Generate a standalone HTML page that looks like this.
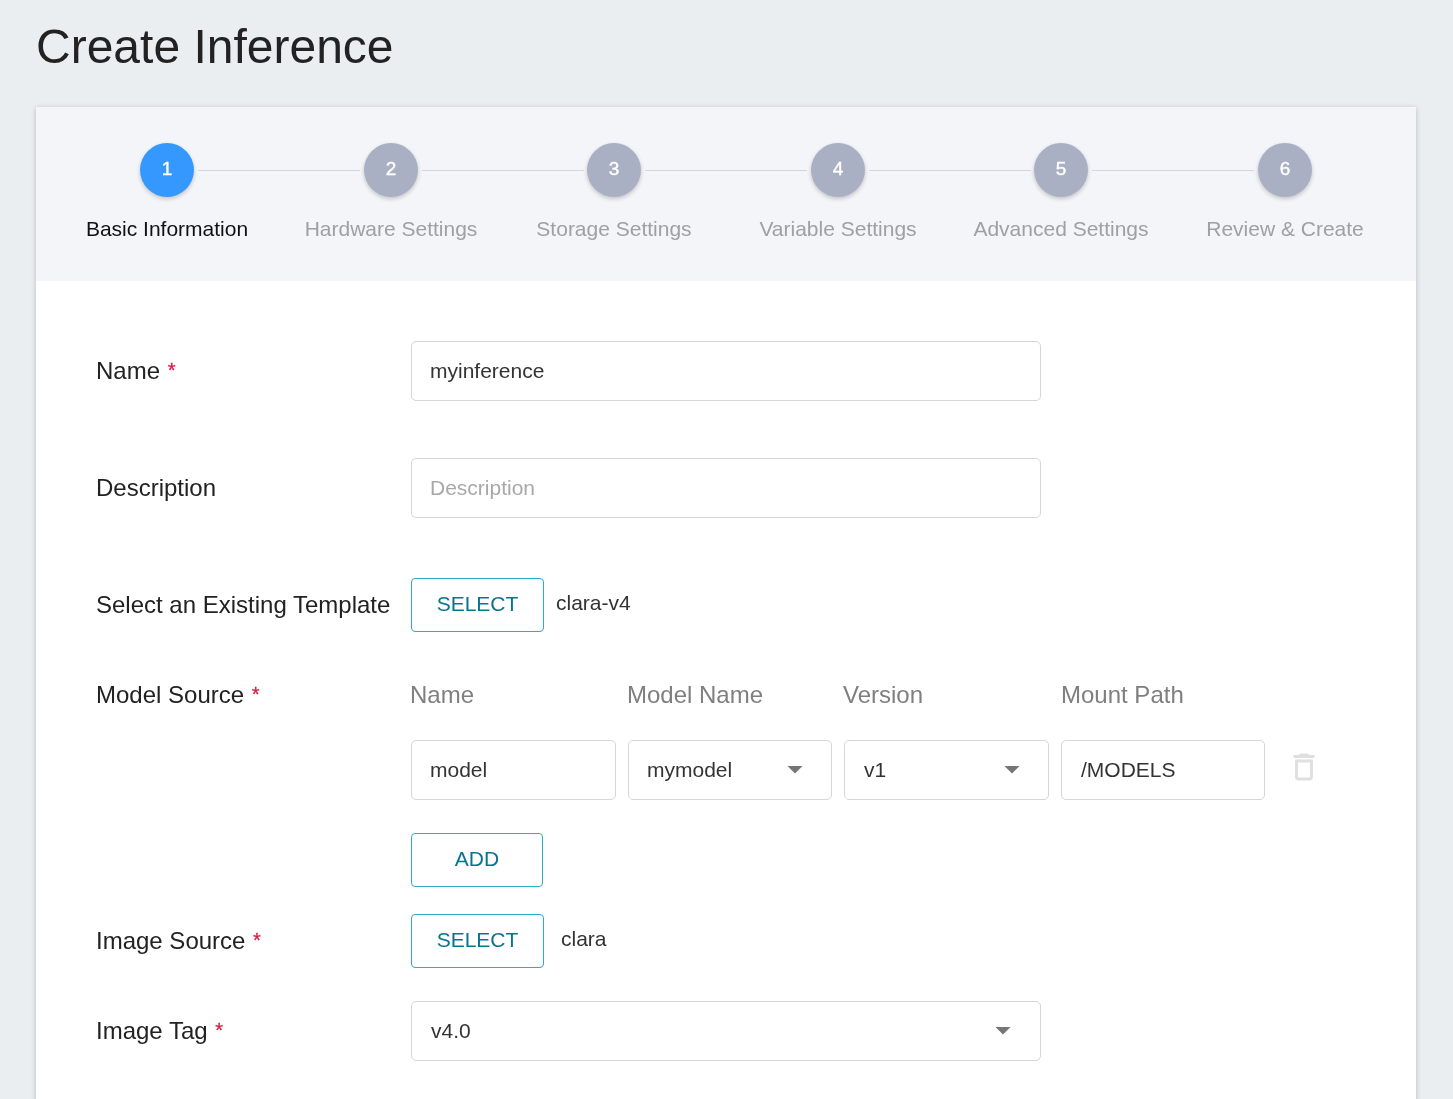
<!DOCTYPE html>
<html><head><meta charset="utf-8">
<style>
html,body{margin:0;padding:0;}
body{width:1453px;height:1099px;overflow:hidden;background:#ebeef1;font-family:"Liberation Sans",sans-serif;position:relative;}
.wrap{position:absolute;left:0;top:0;width:1453px;height:1099px;will-change:transform;}
.t{position:absolute;white-space:nowrap;line-height:1;}
.card{position:absolute;left:36px;top:107px;width:1380px;height:1100px;background:#fff;box-shadow:0 1px 5px rgba(0,0,0,0.22);}
.hdr{position:absolute;left:0;top:0;width:1380px;height:174px;background:#f4f5f9;}
.circ{position:absolute;width:54px;height:54px;border-radius:50%;background:#aab0c4;box-shadow:0 2px 4px rgba(0,0,0,0.2);color:#fff;font-size:19px;-webkit-text-stroke:0.4px #fff;text-align:center;line-height:52px;}
.circ.on{background:#3598fe;}
.line{position:absolute;height:1px;background:#d3d6dd;}
.slab{position:absolute;font-size:21px;color:#a0a0a0;text-align:center;width:223px;line-height:1;white-space:nowrap;}
.lab{font-size:24px;color:#222;}
.req{color:#dc1a45;font-size:20px;-webkit-text-stroke:0.3px #dc1a45;position:relative;top:-2px;left:1px;}
.box{position:absolute;box-sizing:border-box;border:1px solid #d6d6d6;border-radius:5px;background:#fff;}
.btn{position:absolute;box-sizing:border-box;border:1px solid #2badc3;border-radius:4px;background:#fff;color:#08758f;font-size:21px;text-align:center;}
.val{font-size:21px;color:#333;}
.col{font-size:24px;color:#7f7f7f;}
</style></head><body><div class="wrap">
<div class="t" style="left:36px;top:23px;font-size:48px;color:#222;">Create Inference</div>
<div class="card">
  <div class="hdr">
    <div class="line" style="left:162px;width:162px;top:63px;"></div>
    <div class="line" style="left:386px;width:162px;top:63px;"></div>
    <div class="line" style="left:609px;width:162px;top:63px;"></div>
    <div class="line" style="left:833px;width:162px;top:63px;"></div>
    <div class="line" style="left:1056px;width:162px;top:63px;"></div>
    <div class="circ on" style="left:104px;top:36px;">1</div>
    <div class="circ" style="left:328px;top:36px;">2</div>
    <div class="circ" style="left:551px;top:36px;">3</div>
    <div class="circ" style="left:775px;top:36px;">4</div>
    <div class="circ" style="left:998px;top:36px;">5</div>
    <div class="circ" style="left:1222px;top:36px;">6</div>
    <div class="slab" style="left:19.5px;top:111px;color:#111;">Basic Information</div>
    <div class="slab" style="left:243.5px;top:111px;">Hardware Settings</div>
    <div class="slab" style="left:466.5px;top:111px;">Storage Settings</div>
    <div class="slab" style="left:690.5px;top:111px;">Variable Settings</div>
    <div class="slab" style="left:913.5px;top:111px;">Advanced Settings</div>
    <div class="slab" style="left:1137.5px;top:111px;">Review &amp; Create</div>
  </div>
</div>

<!-- form -->
<div class="t lab" style="left:96px;top:359px;">Name <span class="req">*</span></div>
<div class="box" style="left:411px;top:341px;width:630px;height:60px;"></div>
<div class="t val" style="left:430px;top:360px;">myinference</div>

<div class="t lab" style="left:96px;top:476px;">Description</div>
<div class="box" style="left:411px;top:458px;width:630px;height:60px;"></div>
<div class="t val" style="left:430px;top:477px;color:#a8a8a8;">Description</div>

<div class="t lab" style="left:96px;top:593px;">Select an Existing Template</div>
<div class="btn" style="left:411px;top:578px;width:133px;height:54px;line-height:50px;">SELECT</div>
<div class="t val" style="left:556px;top:592px;">clara-v4</div>

<div class="t lab" style="left:96px;top:683px;">Model Source <span class="req">*</span></div>
<div class="t col" style="left:410px;top:683px;">Name</div>
<div class="t col" style="left:627px;top:683px;">Model Name</div>
<div class="t col" style="left:843px;top:683px;">Version</div>
<div class="t col" style="left:1061px;top:683px;">Mount Path</div>

<div class="box" style="left:411px;top:740px;width:205px;height:60px;"></div>
<div class="box" style="left:628px;top:740px;width:204px;height:60px;"></div>
<div class="box" style="left:844px;top:740px;width:205px;height:60px;"></div>
<div class="box" style="left:1061px;top:740px;width:204px;height:60px;"></div>
<div class="t val" style="left:430px;top:759px;">model</div>
<div class="t val" style="left:647px;top:759px;">mymodel</div>
<div class="t val" style="left:864px;top:759px;">v1</div>
<div class="t val" style="left:1081px;top:759px;">/MODELS</div>
<svg style="position:absolute;left:777px;top:751px" width="36" height="36" viewBox="0 0 24 24"><path d="M7 10l5 5 5-5z" fill="#757575"/></svg>
<svg style="position:absolute;left:994px;top:751px" width="36" height="36" viewBox="0 0 24 24"><path d="M7 10l5 5 5-5z" fill="#757575"/></svg>
<svg style="position:absolute;left:1286px;top:749px" width="36" height="36" viewBox="0 0 24 24"><path d="M6 19c0 1.1.9 2 2 2h8c1.1 0 2-.9 2-2V7H6v12zM8 9h8v10H8V9zm7.5-5l-1-1h-5l-1 1H5v2h14V4z" fill="#e0e0e0"/></svg>

<div class="btn" style="left:411px;top:833px;width:132px;height:54px;line-height:50px;">ADD</div>

<div class="t lab" style="left:96px;top:929px;">Image Source <span class="req">*</span></div>
<div class="btn" style="left:411px;top:914px;width:133px;height:54px;line-height:50px;">SELECT</div>
<div class="t val" style="left:561px;top:928px;">clara</div>

<div class="t lab" style="left:96px;top:1019px;">Image Tag <span class="req">*</span></div>
<div class="box" style="left:411px;top:1001px;width:630px;height:60px;"></div>
<div class="t val" style="left:431px;top:1020px;">v4.0</div>
<svg style="position:absolute;left:985px;top:1012px" width="36" height="36" viewBox="0 0 24 24"><path d="M7 10l5 5 5-5z" fill="#757575"/></svg>
</div></body></html>
